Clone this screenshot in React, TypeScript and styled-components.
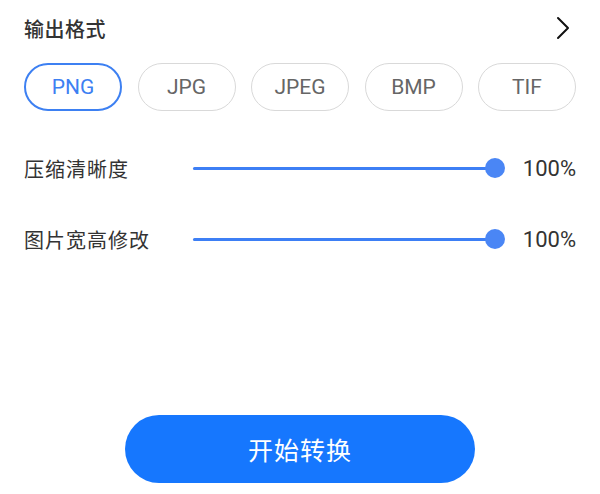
import React, { useState } from 'react';
import styled, { createGlobalStyle } from 'styled-components';

const GlobalStyle = createGlobalStyle`
  html, body {
    margin: 0;
    padding: 0;
    background: #fff;
  }
  body {
    font-family: Roboto, "Noto Sans CJK SC", sans-serif;
    color: #333;
  }
`;

const Page = styled.div`
  width: 600px;
  height: 494px;
  box-sizing: border-box;
  padding: 0 24px;
  display: flex;
  flex-direction: column;
`;

const Header = styled.div`
  height: 56px;
  display: flex;
  align-items: center;
  justify-content: space-between;
`;

const Title = styled.span`
  font-size: 20px;
  font-weight: 500;
  color: #333;
  letter-spacing: 0.5px;
`;

const Chevron = styled.svg`
  width: 14px;
  height: 24px;
  margin-right: 6px;
`;

const Formats = styled.div`
  margin-top: 7px;
  display: flex;
  justify-content: space-between;
`;

const Pill = styled.button<{ $active?: boolean }>`
  width: 98px;
  height: 48px;
  box-sizing: border-box;
  border-radius: 24px;
  background: #fff;
  border: ${p => (p.$active ? '2px solid #3d80f2' : '1.5px solid #d9d9d9')};
  color: ${p => (p.$active ? '#3d80f2' : '#666')};
  font-family: Roboto, "Noto Sans CJK SC", sans-serif;
  font-size: 21px;
  padding: 0;
  cursor: pointer;
`;

const SliderRow = styled.div<{ $top: number }>`
  margin-top: ${p => p.$top}px;
  height: 48px;
  display: flex;
  align-items: center;
`;

const Label = styled.span`
  width: 169px;
  flex-shrink: 0;
  font-size: 20px;
  color: #333;
  letter-spacing: 1px;
`;

const Track = styled.div`
  position: relative;
  flex: 1;
  height: 3px;
  margin-right: 25px;
  border-radius: 2px;
  background: #e3e3e3;
`;

const Fill = styled.div`
  position: absolute;
  left: 0;
  top: 0;
  bottom: 0;
  background: #3d7ff5;
  border-radius: 2px;
`;

const Thumb = styled.div`
  position: absolute;
  top: 50%;
  width: 20px;
  height: 20px;
  border-radius: 50%;
  background: #4a86f5;
  transform: translate(-50%, -50%);
`;

const Value = styled.span`
  width: 56px;
  text-align: right;
  font-size: 22px;
  color: #333;
`;

const Footer = styled.div`
  margin-top: auto;
  margin-bottom: 11px;
  display: flex;
  justify-content: center;
`;

const StartButton = styled.button`
  width: 350px;
  height: 68px;
  border: none;
  border-radius: 34px;
  background: #1677fe;
  color: #fff;
  font-family: "Noto Sans CJK SC", sans-serif;
  font-size: 25px;
  letter-spacing: 1px;
  cursor: pointer;
`;

const Slider: React.FC<{ label: string; value: number; top: number }> = ({ label, value, top }) => (
  <SliderRow $top={top}>
    <Label>{label}</Label>
    <Track>
      <Fill style={{ width: `${value}%` }} />
      <Thumb style={{ left: `${value}%` }} />
    </Track>
    <Value>{value}%</Value>
  </SliderRow>
);

const formats = ['PNG', 'JPG', 'JPEG', 'BMP', 'TIF'];

export default function App() {
  const [format, setFormat] = useState('PNG');

  return (
    <>
      <GlobalStyle />
      <Page>
        <Header>
          <Title>输出格式</Title>
          <Chevron viewBox="0 0 14 24" fill="none">
            <path d="M2 2l10 10L2 22" stroke="#111" strokeWidth="2" strokeLinecap="round" strokeLinejoin="round" />
          </Chevron>
        </Header>
        <Formats>
          {formats.map(f => (
            <Pill key={f} $active={f === format} onClick={() => setFormat(f)}>
              {f}
            </Pill>
          ))}
        </Formats>
        <Slider label="压缩清晰度" value={100} top={33} />
        <Slider label="图片宽高修改" value={100} top={23} />
        <Footer>
          <StartButton>开始转换</StartButton>
        </Footer>
      </Page>
    </>
  );
}
